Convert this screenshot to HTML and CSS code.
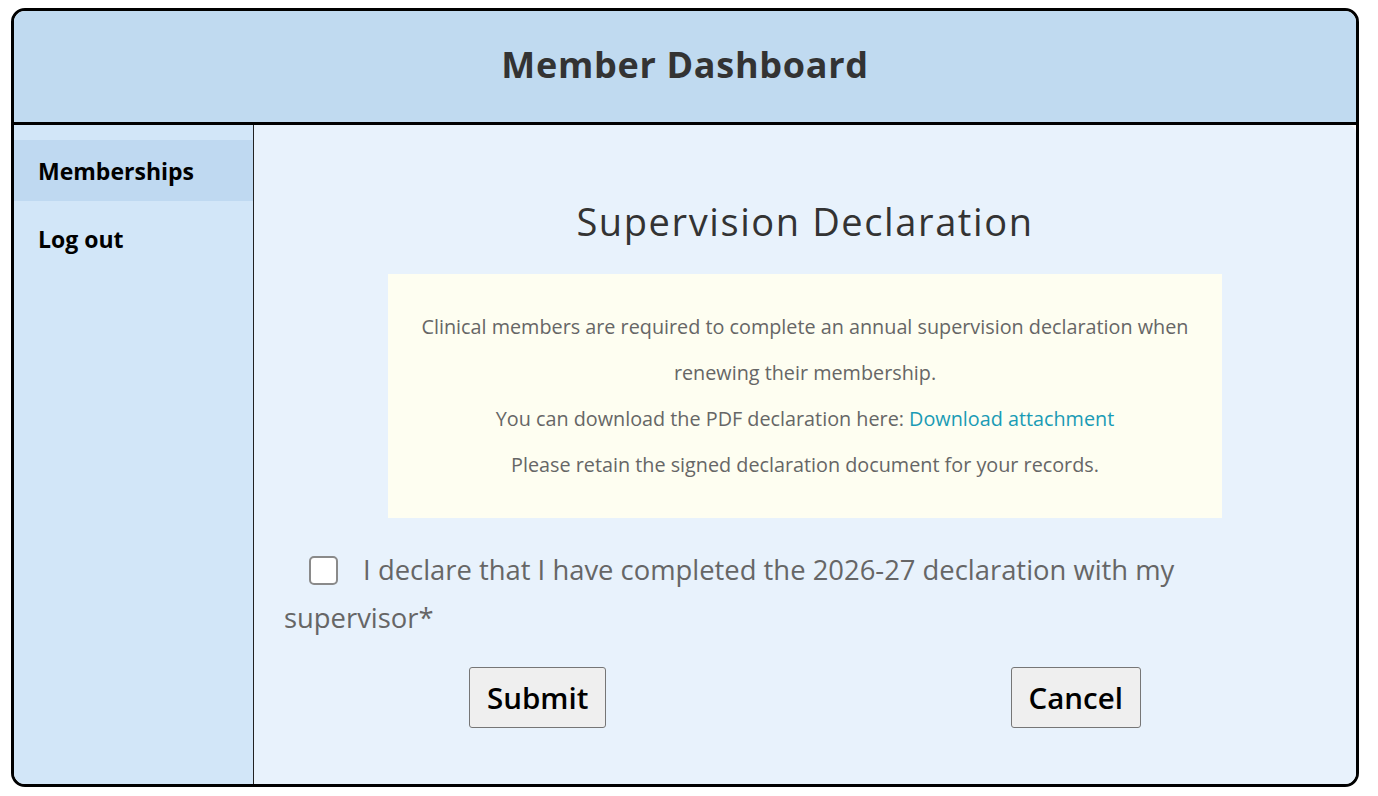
FILE: index.html
```html
<!DOCTYPE html>
<html lang="en">
<head>
    <meta charset="UTF-8">
    <meta name="viewport" content="width=device-width, initial-scale=1.0">
    <title>Member Dashboard</title>
    <link rel="stylesheet" href="styles.css">
</head>
<body>

    <div class="dashboard">
        <div class="dashboard-header">Member Dashboard</div>
        <div class="dashboard-body">
            <nav class="sidebar">
                <a class="nav-item active" href="#">Memberships</a>
                <a class="nav-item" href="#">Log out</a>
            </nav>
            <main class="content">
                <h1 class="page-title">Supervision Declaration</h1>
                <div class="notice">
                    <p>Clinical members are required to complete an annual supervision declaration when renewing their membership.</p>
                    <p>You can download the PDF declaration here: <a href="#" class="notice-link">Download attachment</a></p>
                    <p>Please retain the signed declaration document for your records.</p>
                </div>
                <form class="declare-form">
                    <label class="declare-label">
                        <input type="checkbox" class="declare-check">
                        I declare that I have completed the 2026-27 declaration with my supervisor*
                    </label>
                    <div class="form-buttons">
                        <button type="submit" class="form-button">Submit</button>
                        <button type="button" class="form-button">Cancel</button>
                    </div>
                </form>
            </main>
        </div>
    </div>

</body>
</html>
```

FILE: styles.css
```css
* {
    margin: 0;
    padding: 0;
    box-sizing: border-box;
    font-family: 'Open Sans', 'Noto Sans', sans-serif;
}

body {
    background: #ffffff;
}

.dashboard {
    width: 1348px;
    height: 779px;
    margin: 8px 0 0 11px;
    border: 3px solid #000;
    border-radius: 14px;
    overflow: hidden;
    background: #ffffff;
    display: flex;
    flex-direction: column;
}

.dashboard-header {
    height: 114px;
    padding-bottom: 4px;
    background: #c0daf0;
    border-bottom: 3px solid #000;
    display: flex;
    align-items: center;
    justify-content: center;
    font-size: 36px;
    font-weight: 700;
    letter-spacing: 0.7px;
    color: #333;
}

.dashboard-body {
    flex: 1;
    display: flex;
}

.sidebar {
    width: 240px;
    background: #d2e6f8;
    border-right: 1px solid #222;
    padding-top: 15px;
    display: flex;
    flex-direction: column;
}

.nav-item {
    display: flex;
    align-items: center;
    height: 61px;
    padding-left: 24px;
    margin-bottom: 7px;
    color: #000;
    text-decoration: none;
    font-size: 23px;
    font-weight: 700;
}

.nav-item.active {
    background: #bfd9f1;
}

.content {
    flex: 1;
    background: #e8f2fc;
    border-top-right-radius: 8px;
    padding: 0 30px;
    display: flex;
    flex-direction: column;
    align-items: center;
}

.page-title {
    margin-top: 70px;
    margin-bottom: 27px;
    font-size: 38px;
    font-weight: 500;
    letter-spacing: 1.6px;
    line-height: 52px;
    color: #333;
}

.notice {
    width: 834px;
    padding: 30px;
    background: #fefef1;
    text-align: center;
    font-size: 19.8px;
    line-height: 46px;
    color: #666;
}

.notice-link {
    color: #1a9bb5;
    text-decoration: none;
}

.declare-form {
    align-self: stretch;
    margin-top: 28px;
}

.declare-label {
    display: block;
    font-size: 27.4px;
    line-height: 48px;
    color: #666;
}

.declare-check {
    width: 29px;
    height: 29px;
    margin: 0 18px 0 25px;
    vertical-align: -5px;
    appearance: none;
    border: 2px solid #8a8a8a;
    border-radius: 5px;
    background: #fff;
}

.form-buttons {
    display: flex;
    justify-content: space-around;
    margin: 25px -17px 0;
}

.form-button {
    padding: 9px 17px;
    font-size: 29.5px;
    font-weight: 600;
    line-height: 41px;
    color: #000;
    background: #efefef;
    border: 1px solid #767676;
    border-radius: 3px;
}
```
